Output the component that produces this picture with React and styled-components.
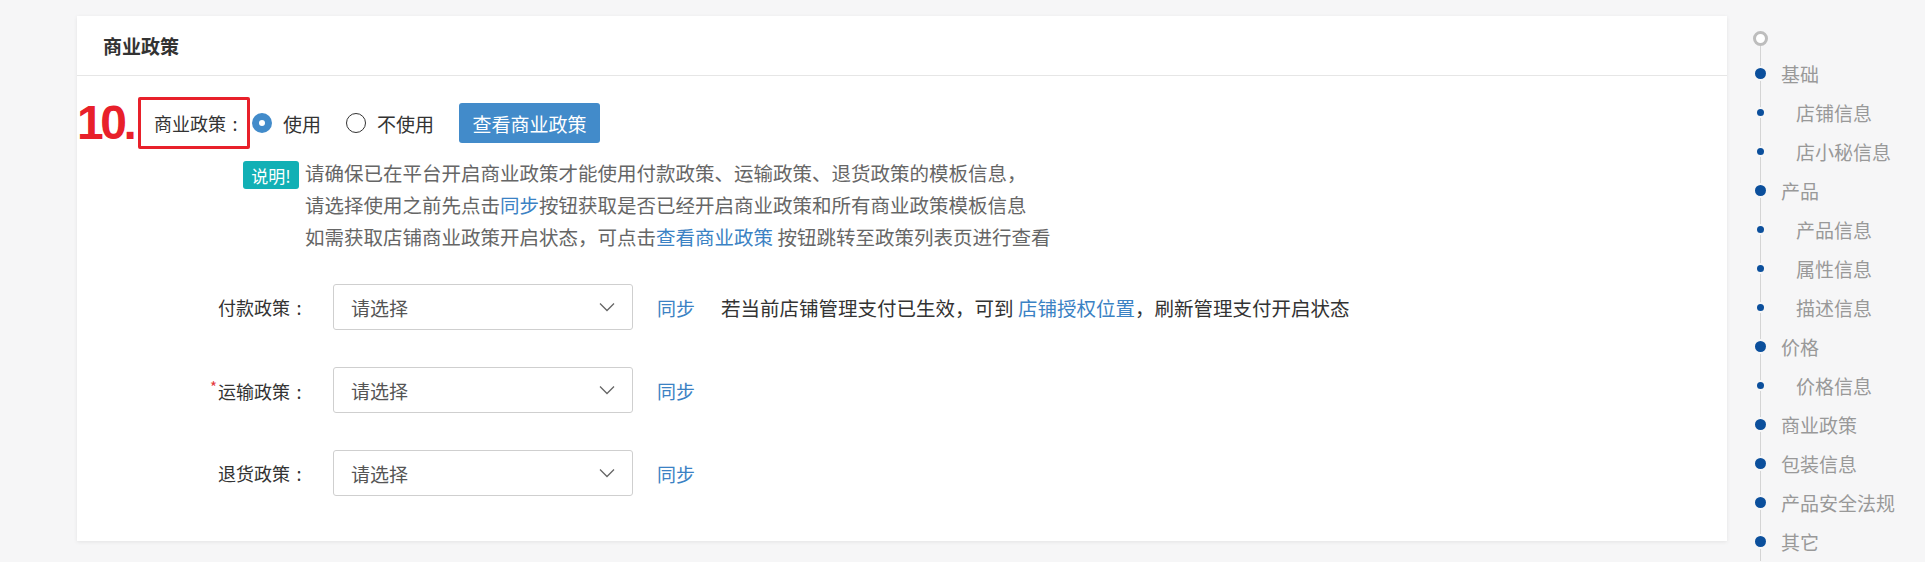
import React from 'react'
import styled, { createGlobalStyle } from 'styled-components'

const GlobalStyle = createGlobalStyle`
  body {
    margin: 0;
    background: #f6f6f7;
    font-family: "Noto Sans CJK SC", "Noto Sans", sans-serif;
    color: #333;
  }
`

const Page = styled.div`
  display: flex;
  flex-direction: row;
  align-items: flex-start;
  padding: 16px 0 0 77px;
  height: 546px;
  overflow: hidden;
`

const Card = styled.div`
  width: 1650px;
  background: #fff;
  box-shadow: 0 1px 4px rgba(0, 0, 0, 0.08);
`

const CardHeader = styled.div`
  height: 59px;
  display: flex;
  align-items: center;
  padding-left: 26px;
  border-bottom: 1px solid #e6e6e6;
  font-size: 19px;
  font-weight: bold;
  color: #333;
`

const CardBody = styled.div`
  padding: 21px 0 45px 0;
`

const TopRow = styled.div`
  display: flex;
  align-items: center;
  height: 52px;
`

const StepNo = styled.div`
  width: 61px;
  font-family: "Liberation Sans", Arial, sans-serif;
  font-weight: bold;
  font-size: 48px;
  letter-spacing: -3.5px;
  line-height: 52px;
  color: #e8202a;
`

const MarkBox = styled.div`
  width: 112px;
  height: 52px;
  box-sizing: border-box;
  border: 3px solid #e8202a;
  border-radius: 2px;
  display: flex;
  align-items: center;
  padding-left: 13px;
  font-size: 18px;
  color: #333;
  white-space: nowrap;
`

const Colon = styled.span`
  display: inline-block;
  width: 1em;
  text-align: center;
`

const RadioGroup = styled.div`
  display: flex;
  align-items: center;
  margin-left: 2px;
  gap: 25px;
`

const RadioOption = styled.label`
  display: flex;
  align-items: center;
  gap: 11px;
  font-size: 19px;
  color: #333;
`

const RadioDot = styled.span`
  width: 20px;
  height: 20px;
  box-sizing: border-box;
  border-radius: 50%;
  display: flex;
  align-items: center;
  justify-content: center;
  background: ${p => (p.$checked ? '#428bca' : '#fff')};
  border: ${p => (p.$checked ? 'none' : '1px solid #333')};
  &::after {
    content: '';
    display: ${p => (p.$checked ? 'block' : 'none')};
    width: 6px;
    height: 6px;
    border-radius: 50%;
    background: #fff;
  }
`

const PrimaryButton = styled.button`
  margin-left: 25px;
  width: 141px;
  height: 40px;
  border: none;
  border-radius: 3px;
  background: #428bca;
  color: #fff;
  font-family: inherit;
  font-size: 19px;
  padding: 0;
`

const Note = styled.div`
  display: flex;
  align-items: flex-start;
  margin: 8px 0 0 166px;
`

const Badge = styled.span`
  margin-top: 4px;
  width: 56px;
  height: 28px;
  border-radius: 3px;
  background: #12b0b5;
  color: #fff;
  font-size: 17px;
  display: flex;
  align-items: center;
  justify-content: center;
  flex-shrink: 0;
`

const NoteText = styled.div`
  margin-left: 6px;
  font-size: 19.5px;
  line-height: 32px;
  color: #666;
`

const Link = styled.a`
  color: #3b82c4;
  text-decoration: none;
`

const FormList = styled.div`
  display: flex;
  flex-direction: column;
  gap: 37px;
  margin-top: 31px;
`

const FormRow = styled.div`
  display: flex;
  align-items: center;
  height: 46px;
`

const FieldLabel = styled.div`
  width: 231px;
  margin-right: 25px;
  text-align: right;
  font-size: 18px;
  color: #333;
  white-space: nowrap;
`

const Required = styled.span`
  color: #e4393c;
  font-size: 15px;
  vertical-align: 6px;
  margin-right: 1px;
`

const Select = styled.div`
  width: 300px;
  height: 46px;
  box-sizing: border-box;
  border: 1px solid #cfcfcf;
  border-radius: 3px;
  display: flex;
  align-items: center;
  justify-content: space-between;
  padding: 0 17px 0 17px;
  font-size: 19px;
  color: #555;
`

const SyncLink = styled(Link)`
  margin-left: 24px;
  font-size: 19px;
`

const Hint = styled.span`
  margin-left: 26px;
  font-size: 19.5px;
  color: #333;
`

const Nav = styled.div`
  margin-left: 18px;
  display: flex;
  flex-direction: column;
  padding-top: 7px;
`

const NavItem = styled.div`
  display: flex;
  align-items: center;
  height: ${p => (p.$head ? '31px' : '39px')};
`

const DotCell = styled.div`
  width: 30px;
  height: 100%;
  display: flex;
  align-items: center;
  justify-content: center;
  background: linear-gradient(#d4d4d4, #d4d4d4) no-repeat;
  background-size: 1px ${p => (p.$head ? '50%' : '100%')};
  background-position: ${p => (p.$head ? 'center bottom' : 'center')};
`

const Dot = styled.span`
  width: ${p => (p.$small ? '7px' : '11px')};
  height: ${p => (p.$small ? '7px' : '11px')};
  border-radius: 50%;
  background: #0b4f9c;
  box-shadow: 0 0 0 2px #f6f6f7;
`

const HeadRing = styled.span`
  width: 15px;
  height: 15px;
  box-sizing: border-box;
  border-radius: 50%;
  border: 3px solid #bdbdbd;
  background: #fff;
`

const NavText = styled.span`
  margin-left: ${p => (p.$small ? '21px' : '6px')};
  font-size: 19px;
  color: #999;
  white-space: nowrap;
`

const navItems = [
  { text: '基础' },
  { text: '店铺信息', small: true },
  { text: '店小秘信息', small: true },
  { text: '产品' },
  { text: '产品信息', small: true },
  { text: '属性信息', small: true },
  { text: '描述信息', small: true },
  { text: '价格' },
  { text: '价格信息', small: true },
  { text: '商业政策' },
  { text: '包装信息' },
  { text: '产品安全法规' },
  { text: '其它' },
]

function Chevron() {
  return (
    <svg width="16" height="10" viewBox="0 0 16 10">
      <path d="M1 1.5 L8 8.5 L15 1.5" fill="none" stroke="#666" strokeWidth="1.3" />
    </svg>
  )
}

function PolicyRow({ label, required, children }) {
  return (
    <FormRow>
      <FieldLabel>
        {required && <Required>*</Required>}
        {label}
        <Colon>:</Colon>
      </FieldLabel>
      <Select>
        <span>请选择</span>
        <Chevron />
      </Select>
      <SyncLink>同步</SyncLink>
      {children}
    </FormRow>
  )
}

export default function App() {
  return (
    <>
      <GlobalStyle />
      <Page>
        <Card>
          <CardHeader>商业政策</CardHeader>
          <CardBody>
            <TopRow>
              <StepNo>10.</StepNo>
              <MarkBox>
                商业政策<Colon>:</Colon>
              </MarkBox>
              <RadioGroup>
                <RadioOption>
                  <RadioDot $checked />
                  使用
                </RadioOption>
                <RadioOption>
                  <RadioDot />
                  不使用
                </RadioOption>
              </RadioGroup>
              <PrimaryButton>查看商业政策</PrimaryButton>
            </TopRow>
            <Note>
              <Badge>说明!</Badge>
              <NoteText>
                请确保已在平台开启商业政策才能使用付款政策、运输政策、退货政策的模板信息，
                <br />
                请选择使用之前先点击<Link>同步</Link>按钮获取是否已经开启商业政策和所有商业政策模板信息
                <br />
                如需获取店铺商业政策开启状态，可点击<Link>查看商业政策</Link> 按钮跳转至政策列表页进行查看
              </NoteText>
            </Note>
            <FormList>
              <PolicyRow label="付款政策">
                <Hint>
                  若当前店铺管理支付已生效，可到 <Link>店铺授权位置</Link>，刷新管理支付开启状态
                </Hint>
              </PolicyRow>
              <PolicyRow label="运输政策" required />
              <PolicyRow label="退货政策" />
            </FormList>
          </CardBody>
        </Card>
        <Nav>
          <NavItem $head>
            <DotCell $head>
              <HeadRing />
            </DotCell>
          </NavItem>
          {navItems.map(item => (
            <NavItem key={item.text}>
              <DotCell>
                <Dot $small={item.small} />
              </DotCell>
              <NavText $small={item.small}>{item.text}</NavText>
            </NavItem>
          ))}
        </Nav>
      </Page>
    </>
  )
}
